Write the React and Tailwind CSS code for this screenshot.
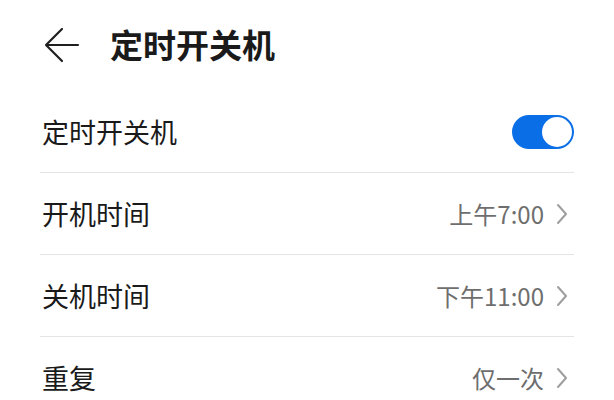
import { useState } from 'react'

const ROWS = [
  { label: '开机时间', value: '上午7:00' },
  { label: '关机时间', value: '下午11:00' },
  { label: '重复', value: '仅一次' },
]

function Chevron() {
  return (
    <svg width="12" height="22" viewBox="0 0 12 22" fill="none" className="ml-3">
      <path d="M2 2 L10 11 L2 20" stroke="#9e9e9e" strokeWidth="2" strokeLinejoin="round" strokeLinecap="round" />
    </svg>
  )
}

function Toggle({ on, onChange }) {
  return (
    <button onClick={() => onChange(!on)}
      className={`w-[62px] h-[34px] rounded-full p-[2px] flex items-center ${on ? 'bg-[#0a6fe6] justify-end' : 'bg-gray-300 justify-start'}`}>
      <span className="w-[30px] h-[30px] rounded-full bg-white block" />
    </button>
  )
}

export default function App() {
  const [enabled, setEnabled] = useState(true)

  return (
    <main className="w-[614px] h-[400px] bg-white overflow-hidden" style={{ fontFamily: '"Noto Sans CJK SC", "Noto Sans", sans-serif' }}>
      <header className="h-[91px] flex items-center pl-[44px] pb-[2px]">
        <svg width="36" height="36" viewBox="0 0 36 36" fill="none">
          <path d="M34 18 H2 M18 2 L2 18 L18 34" stroke="#1f1f1f" strokeWidth="2.2" strokeLinecap="round" strokeLinejoin="round" />
        </svg>
        <h1 className="ml-[30px] text-[33px] font-bold text-[#1a1a1a] leading-none">定时开关机</h1>
      </header>

      <div className="px-[40px]">
        <div className="h-[82px] flex items-center justify-between border-b border-[#e4e4e4]">
          <span className="text-[27px] text-[#1a1a1a] leading-none pl-[2px]">定时开关机</span>
          <Toggle on={enabled} onChange={setEnabled} />
        </div>
        {ROWS.map(r => (
          <div key={r.label} className="h-[82px] flex items-center justify-between border-b border-[#e4e4e4]">
            <span className="text-[27px] text-[#1a1a1a] leading-none pl-[2px]">{r.label}</span>
            <span className="flex items-center pr-[6px]">
              <span className="text-[24px] text-[#6e6e6e] leading-none">{r.value}</span>
              <Chevron />
            </span>
          </div>
        ))}
      </div>
    </main>
  )
}
